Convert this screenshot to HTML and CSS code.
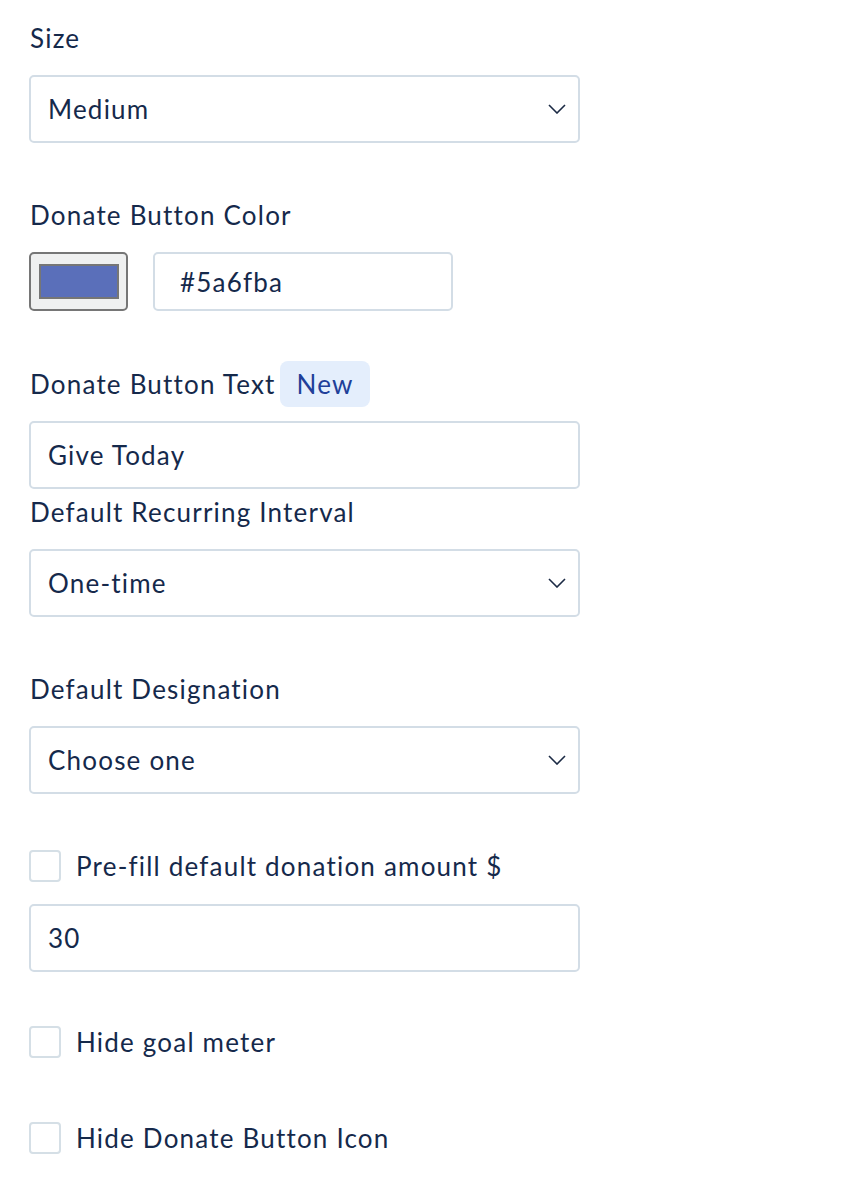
FILE: index.html
```html
<!DOCTYPE html>
<html lang="en">
<head>
<meta charset="utf-8">
<title>Donate Button Settings</title>
<link rel="stylesheet" href="styles.css">
</head>
<body>
<form class="settings">
  <div class="field">
    <div class="label">Size</div>
    <div class="control select">
      <span class="value">Medium</span>
      <svg class="chevron" viewBox="0 0 18 10" width="18" height="10"><path d="M1 1l8 8 8-8" fill="none" stroke="#1b2a44" stroke-width="1.6"/></svg>
    </div>
  </div>

  <div class="field field-color">
    <div class="label">Donate Button Color</div>
    <div class="color-row">
      <div class="swatch"><div class="swatch-fill"></div></div>
      <div class="control hex"><span class="value">#5a6fba</span></div>
    </div>
  </div>

  <div class="field field-tight">
    <div class="label-row">
      <span class="label">Donate Button Text</span>
      <span class="badge">New</span>
    </div>
    <div class="control"><span class="value">Give Today</span></div>
  </div>

  <div class="field">
    <div class="label">Default Recurring Interval</div>
    <div class="control select">
      <span class="value">One-time</span>
      <svg class="chevron" viewBox="0 0 18 10" width="18" height="10"><path d="M1 1l8 8 8-8" fill="none" stroke="#1b2a44" stroke-width="1.6"/></svg>
    </div>
  </div>

  <div class="field">
    <div class="label">Default Designation</div>
    <div class="control select">
      <span class="value">Choose one</span>
      <svg class="chevron" viewBox="0 0 18 10" width="18" height="10"><path d="M1 1l8 8 8-8" fill="none" stroke="#1b2a44" stroke-width="1.6"/></svg>
    </div>
  </div>

  <div class="field field-amount">
    <label class="check"><span class="box"></span><span class="check-text">Pre-fill default donation amount $</span></label>
    <div class="control"><span class="value">30</span></div>
  </div>

  <div class="field field-check">
    <label class="check"><span class="box"></span><span class="check-text">Hide goal meter</span></label>
  </div>

  <div class="field">
    <label class="check"><span class="box"></span><span class="check-text">Hide Donate Button Icon</span></label>
  </div>
</form>
</body>
</html>
```

FILE: styles.css
```css
* { box-sizing: border-box; }

body {
  margin: 0;
  background: #ffffff;
  color: #15294b;
  font-family: Lato, "Noto Sans", sans-serif;
  font-size: 26px;
  letter-spacing: 1.2px;
}

.settings {
  width: 551px;
  margin-left: 29px;
  padding-top: 20px;
  display: flex;
  flex-direction: column;
}

.field {
  display: flex;
  flex-direction: column;
  margin-bottom: 54px;
}

.field-color { margin-bottom: 50px; }
.field-tight { margin-bottom: 5px; }
.field-amount { margin-bottom: 52px; }
.field-check { margin-bottom: 60px; }

.label {
  height: 36px;
  line-height: 36px;
  margin-bottom: 19px;
  padding-left: 1px;
}

.label-row {
  display: flex;
  align-items: center;
  height: 46px;
  margin-bottom: 14px;
}

.label-row .label { margin-bottom: 0; }

.badge {
  margin-left: 4px;
  height: 46px;
  line-height: 46px;
  padding: 0 16px 0 17px;
  background: #e4eefc;
  color: #213f99;
  border-radius: 8px;
}

.control {
  height: 68px;
  border: 2px solid #d3dde6;
  border-radius: 5px;
  background: #fff;
  display: flex;
  align-items: center;
  padding: 0 12px 0 17px;
}

.select { justify-content: space-between; }

.color-row {
  display: flex;
  align-items: center;
  gap: 25px;
}

.swatch {
  width: 99px;
  height: 59px;
  border: 2px solid #767676;
  border-radius: 5px;
  background: #eff0f0;
  display: flex;
  align-items: center;
  justify-content: center;
}

.swatch-fill {
  width: 80px;
  height: 35px;
  border: 2px solid #767676;
  background: #5a6fba;
}

.hex {
  width: 300px;
  height: 59px;
  padding-left: 25px;
}

.check {
  display: flex;
  align-items: center;
  height: 36px;
  gap: 15px;
}

.field .check + .control { margin-top: 20px; }

.box {
  width: 32px;
  height: 32px;
  border: 2px solid #d5dfe6;
  border-radius: 4px;
  background: #fff;
}
```
